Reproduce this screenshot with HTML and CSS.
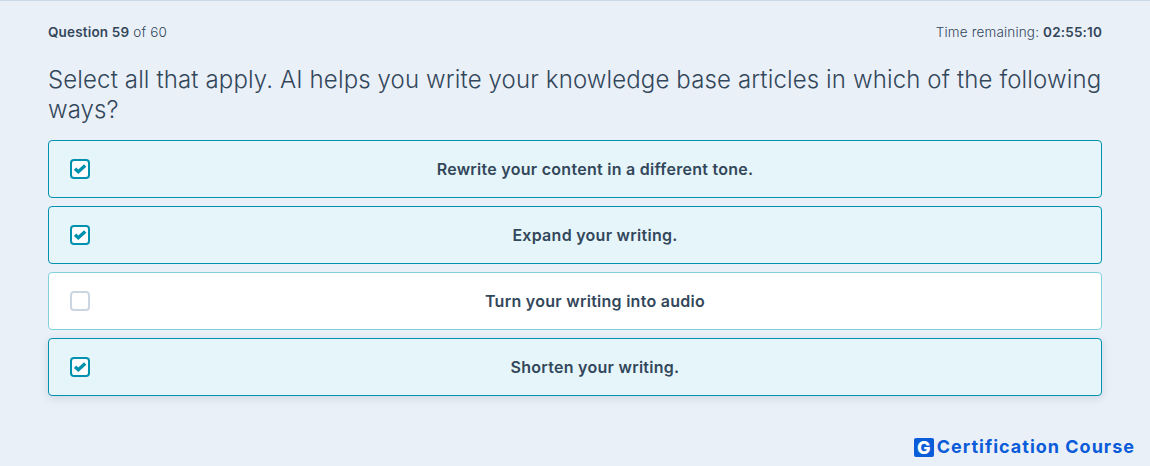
FILE: index.html
```html
<!DOCTYPE html>
<html lang="en">
<head>
<meta charset="utf-8">
<title>Quiz</title>
<link rel="stylesheet" href="styles.css">
</head>
<body>
<main class="page">
  <div class="meta">
    <div><strong>Question 59</strong> of 60</div>
    <div class="time">Time remaining: <strong>02:55:10</strong></div>
  </div>
  <h1 class="question">Select all that apply. AI helps you write your knowledge base articles in which of the following ways?</h1>
  <div class="options">
    <div class="option selected">
      <span class="box"><svg viewBox="0 0 20 20" class="tick"><path d="M5 9.8l3.3 2.9L15.2 6.6"/></svg></span>
      <span class="label">Rewrite your content in a different tone.</span>
    </div>
    <div class="option selected">
      <span class="box"><svg viewBox="0 0 20 20" class="tick"><path d="M5 9.8l3.3 2.9L15.2 6.6"/></svg></span>
      <span class="label">Expand your writing.</span>
    </div>
    <div class="option">
      <span class="box"></span>
      <span class="label">Turn your writing into audio</span>
    </div>
    <div class="option selected raised">
      <span class="box"><svg viewBox="0 0 20 20" class="tick"><path d="M5 9.8l3.3 2.9L15.2 6.6"/></svg></span>
      <span class="label">Shorten your writing.</span>
    </div>
  </div>
</main>
<footer class="brand">
  <span class="brand-mark">G</span>
  <span class="brand-name">Certification Course</span>
</footer>
</body>
</html>
```
FILE: styles.css
```css
* { box-sizing: border-box; }
html, body { margin: 0; height: 466px; overflow: hidden; }
body {
  background: #eaf0f8;
  border-top: 1px solid #cbd9e8;
  color: #33475b;
  font-family: "Inter", "Liberation Sans", sans-serif;
  display: flex;
  flex-direction: column;
}
.page { padding: 22px 48px 0; flex: 1; }
.meta {
  display: flex;
  justify-content: space-between;
  font-size: 13.5px;
  line-height: 18px;
  font-weight: 300;
  letter-spacing: 0.17px;
}
.meta strong { font-weight: 600; }
.question {
  margin: 24px 0 15px;
  font-size: 24px;
  line-height: 30px;
  font-weight: 300;
  letter-spacing: 0.13px;
}
.options { display: flex; flex-direction: column; gap: 8px; }
.option {
  height: 58px;
  display: flex;
  align-items: center;
  padding-left: 21px;
  background: #fff;
  border: 1px solid #7fd1de;
  border-radius: 4px;
}
.option.selected { background: #e5f5fa; border-color: #0091ae; }
.option.raised { box-shadow: 0 2px 8px rgba(51, 71, 91, 0.16); }
.box {
  width: 20px;
  height: 20px;
  flex: none;
  background: #fff;
  border: 2px solid #cbd6e2;
  border-radius: 4px;
}
.selected .box { border-color: #0091ae; }
.tick { display: block; width: 20px; height: 20px; margin: -2px; }
.tick path { fill: none; stroke: #0091ae; stroke-width: 3.4; }
.label {
  flex: 1;
  text-align: center;
  padding-right: 1px;
  font-size: 16px;
  font-weight: 600;
  letter-spacing: 0.27px;
}
.brand {
  display: flex;
  justify-content: flex-end;
  align-items: center;
  gap: 3px;
  padding: 0 15px 9px 0;
}
.brand-mark {
  width: 20px;
  height: 19px;
  background: #0b5cd8;
  color: #fff;
  border-radius: 2px;
  font: 800 18px/19px "Inter", sans-serif;
  text-align: center;
}
.brand-name {
  color: #0b5cd8;
  font: 700 18px/20px "Inter", sans-serif;
  letter-spacing: 1px;
}
```
